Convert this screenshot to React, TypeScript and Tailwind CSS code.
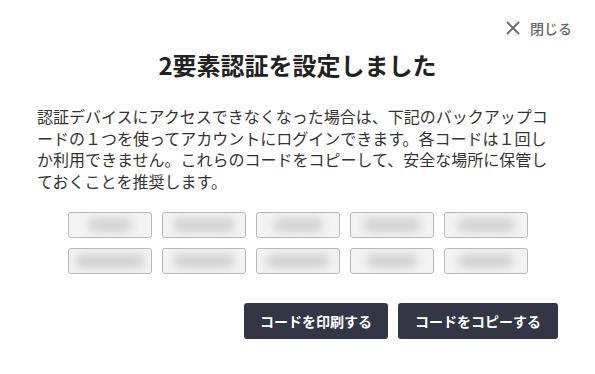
import React from "react";

const codes = [
  [44, 62, 50, 58, 58],
  [70, 62, 64, 52, 56],
];

export default function App() {
  return (
    <div
      className="w-[595px] h-[374px] bg-white text-[#222]"
      style={{ fontFamily: '"Noto Sans CJK JP", "Noto Sans", sans-serif' }}
    >
      <div className="flex justify-end pt-[18px] pr-[23px]">
        <button className="flex items-center gap-[10px] h-[20px] text-[14px] font-medium text-[#666666]">
          <svg width="14" height="14" viewBox="0 0 14 14" fill="none" stroke="#666666" strokeWidth="1.8">
            <path d="M1 1L13 13M13 1L1 13" />
          </svg>
          <span className="leading-[20px]">閉じる</span>
        </button>
      </div>
      <h1 className="mt-[11px] text-center text-[24px] leading-[32px] font-bold text-[#222]">
        2要素認証を設定しました
      </h1>
      <p className="mt-[25px] px-[37px] text-[16px] leading-[21.5px] text-[#333]">
        認証デバイスにアクセスできなくなった場合は、下記のバックアップコードの１つを使ってアカウントにログインできます。各コードは１回しか利用できません。これらのコードをコピーして、安全な場所に保管しておくことを推奨します。
      </p>
      <div className="mt-[20px] mx-auto w-[460px] grid grid-cols-5 gap-x-[10px] gap-y-[10px]">
        {codes.flat().map((w, i) => (
          <div
            key={i}
            className="h-[26px] rounded-[3px] border border-[#b8b8b8] bg-[#f3f3f3] flex items-center justify-center overflow-hidden"
          >
            <div className="h-[14px] rounded-full bg-[#d2d2d2] blur-[4px]" style={{ width: w }} />
          </div>
        ))}
      </div>
      <div className="mt-[29px] flex justify-end gap-[10px] pr-[37px]">
        <button className="h-[36px] w-[144px] rounded-[3px] bg-[#333644] text-white text-[14px] font-bold">
          コードを印刷する
        </button>
        <button className="h-[36px] w-[160px] rounded-[3px] bg-[#333644] text-white text-[14px] font-bold">
          コードをコピーする
        </button>
      </div>
    </div>
  );
}
